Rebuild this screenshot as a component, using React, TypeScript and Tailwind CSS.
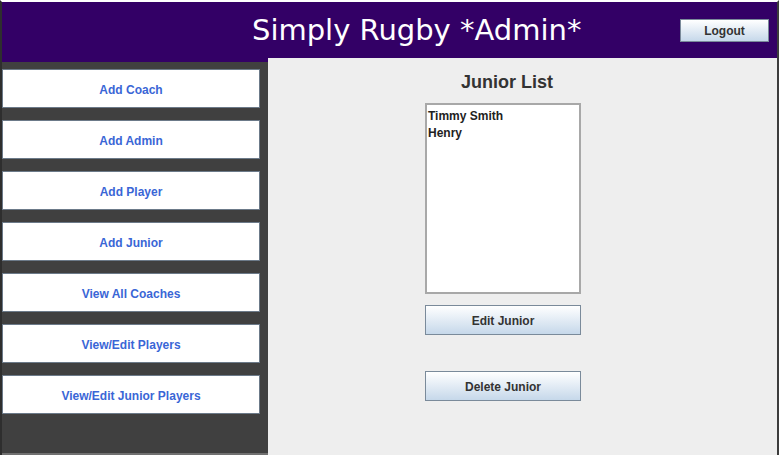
import React from "react";

const sideItems = [
  "Add Coach",
  "Add Admin",
  "Add Player",
  "Add Junior",
  "View All Coaches",
  "View/Edit Players",
  "View/Edit Junior Players",
];

const swingBtn =
  "flex items-center justify-center border border-[#7a8a9a] bg-gradient-to-b from-[#ffffff] to-[#c6d8ea] pt-[2px] text-[12px] font-bold text-[#333333]";

export default function App() {
  return (
    <div
      className="flex h-[455px] w-[779px] flex-col overflow-hidden border-l-2 border-r-2 border-t-2 border-l-[#2e2e2e] border-r-[#3c3c3c] border-t-white bg-[#eeeeee]"
      style={{ fontFamily: '"Liberation Sans", Arial, sans-serif' }}
    >
      {/* Header */}
      <div className="flex h-[56px] shrink-0 items-center bg-[#330066]">
        <div
          className="pl-[250px] pt-[1px] text-[29px] leading-none text-white"
          style={{ fontFamily: '"DejaVu Sans", Verdana, sans-serif' }}
        >
          Simply Rugby *Admin*
        </div>
        <button className={`${swingBtn} ml-auto mr-[8px] h-[23px] w-[89px]`}>
          Logout
        </button>
      </div>

      {/* Body */}
      <div className="flex min-h-0 flex-1">
        {/* Sidebar */}
        <div className="flex w-[266px] shrink-0 flex-col border-b-2 border-b-[#707070] bg-[#404040]">
          <div className="h-[4px] bg-[#330066]" />
          <div className="flex flex-col gap-[12px] pr-[8px] pt-[7px]">
            {sideItems.map((t) => (
              <div
                key={t}
                className="flex h-[39px] items-center justify-center border border-[#6c7a89] bg-white pt-[2px] text-[12px] font-bold text-[#3a66d6]"
              >
                {t}
              </div>
            ))}
          </div>
        </div>

        {/* Main */}
        <div className="relative flex flex-1 flex-col bg-[#eeeeee]">
          <div className="pl-[193px] pt-[13px] text-[18px] font-bold leading-[22px] text-[#333333]">
            Junior List
          </div>
          <div className="ml-[157px] mt-[10px] flex h-[191px] w-[156px] flex-col border-2 border-[#a8a8a8] bg-white pl-[1px] pt-[3px] text-[12px] font-bold leading-[17px] text-[#222222]">
            <div>Timmy Smith</div>
            <div>Henry</div>
          </div>
          <button className={`${swingBtn} ml-[157px] mt-[11px] h-[30px] w-[156px]`}>
            Edit Junior
          </button>
          <button className={`${swingBtn} ml-[157px] mt-[36px] h-[30px] w-[156px]`}>
            Delete Junior
          </button>
        </div>
      </div>
    </div>
  );
}
